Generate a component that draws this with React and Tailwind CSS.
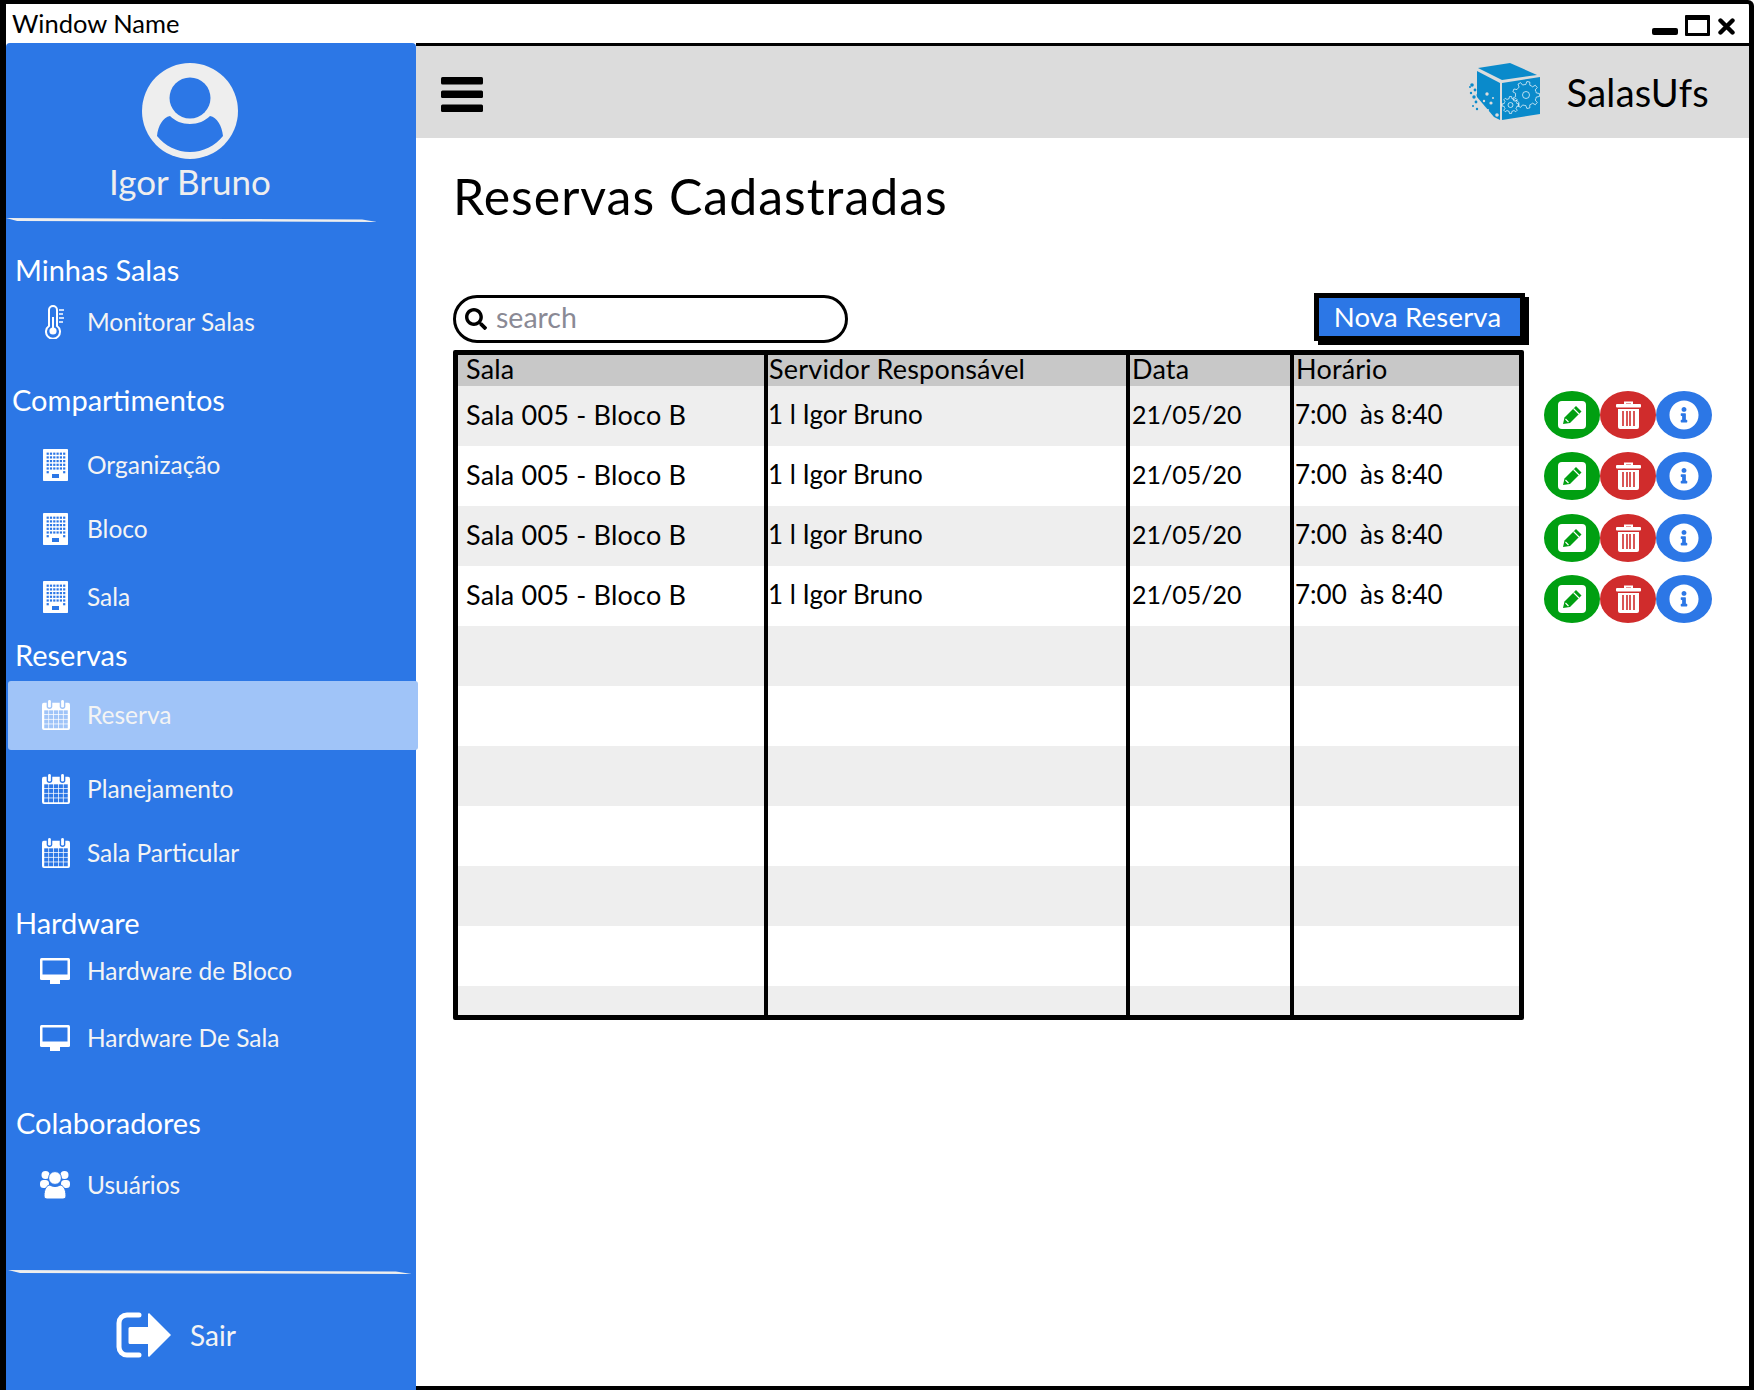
import { FaSearch, FaInfoCircle } from "react-icons/fa";

const FONT = "font-['Lato','Liberation_Sans',sans-serif]";

function Avatar() {
  return (
    <svg viewBox="0 0 96 96" className="w-24 h-24">
      <circle cx="48" cy="48" r="48" fill="#eeeeee" />
      <circle cx="48" cy="35" r="20.5" fill="#2c77e6" />
      <path
        d="M15 73C16 63 21 54 28 53C33 58 40 61 48 61C56 61 63 58 68 53C75 54 80 63 81 73C73 83 61 89 48 89C35 89 23 83 15 73Z"
        fill="#2c77e6"
      />
    </svg>
  );
}

function Thermometer() {
  return (
    <svg viewBox="0 0 20 34" className="w-5 h-[34px]" fill="none" stroke="white">
      <path d="M4 21V5a4 4 0 0 1 8 0V21a7 7 0 1 1-8 0Z" strokeWidth="2" />
      <path d="M8 12V25" strokeWidth="2" />
      <circle cx="8" cy="26" r="3.6" fill="white" stroke="none" />
      <path d="M14 5h5M14 9h4M14 13h5M14 17h4" strokeWidth="1.7" />
    </svg>
  );
}

function Building() {
  const dots = [];
  for (let r = 0; r < 6; r++) {
    for (let c = 0; c < 6; c++) {
      if (r === 5 && c > 0 && c < 5) continue;
      dots.push(<rect key={r + "-" + c} x={3.6 + c * 3.3} y={3.6 + r * 3.7} width="2.2" height="2.2" fill="#2c77e6" />);
    }
  }
  return (
    <svg viewBox="0 0 25 32" className="w-[25px] h-8">
      <rect width="25" height="32" rx="0.8" fill="white" />
      {dots}
      <rect x="9" y="25" width="7" height="4" fill="#2c77e6" />
    </svg>
  );
}

function Calendar({ active }) {
  const cells = [];
  for (let r = 0; r < 4; r++) {
    for (let c = 0; c < 5; c++) {
      cells.push(<rect key={r + "-" + c} x={2.4 + c * 5.2} y={11 + r * 5} width="4.4" height="4.2" />);
    }
  }
  return (
    <svg viewBox="0 0 30 32" className="w-[30px] h-8 ml-[2px]">
      <rect y="3" width="30" height="29" rx="2" fill="white" />
      <g className={active ? "fill-[#a0c4f8]" : "fill-[#2c77e6]"}>
        {cells}
        <rect x="5" y="0" width="6" height="9.500" rx="3" />
        <rect x="19" y="0" width="6" height="9.500" rx="3" />
      </g>
      <rect x="6.500" y="0" width="3" height="8" rx="1.500" fill="white" />
      <rect x="20.500" y="0" width="3" height="8" rx="1.500" fill="white" />
    </svg>
  );
}

function Desktop() {
  return (
    <svg viewBox="0 0 30 26" className="w-[30px] h-[26px]">
      <rect width="30" height="22" rx="1.5" fill="white" />
      <rect x="2.5" y="2.5" width="25" height="14" fill="#2c77e6" />
      <rect x="10" y="22" width="10" height="4" fill="white" />
    </svg>
  );
}

function Users() {
  return (
    <svg viewBox="0 0 30 28" className="w-[30px] h-7">
      <circle cx="5.5" cy="4" r="4" fill="white" />
      <circle cx="24.5" cy="4" r="4" fill="white" />
      <rect x="0" y="9" width="9" height="8" rx="3.5" fill="white" />
      <rect x="21" y="9" width="9" height="8" rx="3.5" fill="white" />
      <circle cx="15" cy="7" r="6.4" fill="white" stroke="#2c77e6" strokeWidth="1" />
      <path
        d="M4 25C4 18 7 14 10 14C13 16 17 16 20 14C23 14 26 18 26 25C26 27 24.500 28 23 28H7C5.500 28 4 27 4 25Z"
        fill="white"
        stroke="#2c77e6"
        strokeWidth="1"
      />
    </svg>
  );
}

function SignOut() {
  return (
    <svg viewBox="0 0 56 46" className="w-14 h-[46px]">
      <path d="M23 3H11a8 8 0 0 0-8 8V35a8 8 0 0 0 8 8H23" fill="none" stroke="white" strokeWidth="5" strokeLinecap="round" />
      <path d="M14 15H32V2.5a1 1 0 0 1 2-.5L55 23L34 44a1 1 0 0 1-2-.5V32H14a1.5 1.5 0 0 1-1.500-1.500V16.500A1.500 1.500 0 0 1 14 15Z" fill="white" />
    </svg>
  );
}

function Bars() {
  return (
    <svg viewBox="0 0 42 35" className="w-[42px] h-[35px] mt-[5px]">
      <rect width="42" height="7.500" rx="1.500" fill="black" />
      <rect y="13.500" width="42" height="7.500" rx="1.500" fill="black" />
      <rect y="27.500" width="42" height="7.500" rx="1.500" fill="black" />
    </svg>
  );
}

// outline of a gear, used twice in the logo
function gearPath(cx, cy, outer, inner, teeth) {
  let d = "";
  const step = (Math.PI * 2) / teeth;
  for (let i = 0; i < teeth; i++) {
    const a = i * step;
    const pts = [
      [inner, a - step * 0.5],
      [inner, a - step * 0.28],
      [outer, a - step * 0.16],
      [outer, a + step * 0.16],
      [inner, a + step * 0.28],
    ];
    pts.forEach(([r, t], k) => {
      d += (i === 0 && k === 0 ? "M" : "L") + (cx + r * Math.cos(t)).toFixed(2) + " " + (cy + r * Math.sin(t)).toFixed(2);
    });
  }
  return d + "Z";
}

function Logo() {
  const particles = [
    [32, 34, 1.8], [35, 39, 1.4], [31, 42, 1.2], [34, 46, 1.7], [36, 51, 1.4], [33, 55, 1], [37, 58, 1.2], [30, 36, 1], [38, 44, 1.500],
  ];
  const holes = [
    [47, 43, 1.7], [44, 50, 1.2], [51, 52, 1.6], [48, 59, 1], [57, 64, 1.8], [53, 47, 1],
  ];
  return (
    <svg viewBox="27 12 74 58" className="w-[74px] h-[58px]">
      <path d="M38 17L70 12L97 24L62 29Z" fill="#0a8acb" />
      <path d="M37 20L60 32L60 69L54 66L37 46Z" fill="#0a8acb" />
      <path d="M62 32L100 26L100 63L62 69Z" fill="#0a8acb" />
      {particles.map(([x, y, r], i) => (
        <circle key={i} cx={x} cy={y} r={r} fill="#0a8acb" />
      ))}
      {holes.map(([x, y, r], i) => (
        <circle key={i} cx={x} cy={y} r={r} fill="#dcdcdc" />
      ))}
      <g fill="none" stroke="white" strokeWidth="0.7">
        <path d={gearPath(86, 44, 13.5, 10.5, 9)} />
        <circle cx="86" cy="44" r="3.500" />
        <path d={gearPath(70.5, 54, 8.5, 6.5, 8)} />
        <circle cx="70.500" cy="54" r="2.500" />
      </g>
    </svg>
  );
}

function Divider({ width }) {
  return (
    <svg viewBox="0 0 100 4" preserveAspectRatio="none" className="block h-1" style={{ width }}>
      <path d="M0 0 L60 1 L96 1.600 L100 4 L50 3.400 L3 3 Z" fill="#eeeeee" />
    </svg>
  );
}

function GroupTitle({ children, className }) {
  return <div className={"h-9 pb-[2px] flex items-center text-[29px] text-white leading-none " + className}>{children}</div>;
}

function NavItem({ icon, label, className }) {
  return (
    <div className={"h-10 pl-[34px] flex items-center text-[24.5px] text-[#f4f4f4] leading-none " + className}>
      <span className="w-[30px] flex justify-center">{icon}</span>
      <span className="ml-[17px]">{label}</span>
    </div>
  );
}

function Sidebar() {
  return (
    <aside className="w-[410px] shrink-0 h-full bg-[#2c77e6] flex flex-col rounded-t-sm">
      <div className="pt-5 flex flex-col items-center pr-[48px] pl-[6px]">
        <Avatar />
        <div className="h-[44px] flex items-center text-[35px] text-[#eeeeee] leading-none">Igor Bruno</div>
      </div>
      <div className="mt-[15px]">
        <Divider width={371} />
      </div>

      <GroupTitle className="mt-[30px] pl-[9px]">Minhas Salas</GroupTitle>
      <NavItem className="mt-[14px]" icon={<Thermometer />} label="Monitorar Salas" />

      <GroupTitle className="mt-[40px] pl-[6px]">Compartimentos</GroupTitle>
      <NavItem className="mt-[27px]" icon={<Building />} label="Organização" />
      <NavItem className="mt-[24px]" icon={<Building />} label="Bloco" />
      <NavItem className="mt-[28px]" icon={<Building />} label="Sala" />

      <GroupTitle className="mt-[20px] pl-[9px]">Reservas</GroupTitle>
      <div className="mt-[8px] ml-[2px] w-[410px] h-[69px] pb-[1px] relative z-10 bg-[#a0c4f8] rounded-[3px] pl-[32px] flex items-center text-[24.5px] text-[#f4f4f4] leading-none">
        <span className="w-[30px] flex justify-center">
          <Calendar active />
        </span>
        <span className="ml-[17px]">Reserva</span>
      </div>
      <NavItem className="mt-[19px]" icon={<Calendar />} label="Planejamento" />
      <NavItem className="mt-[24px]" icon={<Calendar />} label="Sala Particular" />

      <GroupTitle className="mt-[32px] pl-[9px]">Hardware</GroupTitle>
      <NavItem className="mt-[10px]" icon={<Desktop />} label="Hardware de Bloco" />
      <NavItem className="mt-[27px]" icon={<Desktop />} label="Hardware De Sala" />

      <GroupTitle className="mt-[47px] pl-[10px]">Colaboradores</GroupTitle>
      <NavItem className="mt-[24px]" icon={<Users />} label="Usuários" />

      <div className="mt-[65px] ml-[2px]">
        <Divider width={404} />
      </div>
      <div className="mt-[38px] pl-[110px] flex items-center">
        <SignOut />
        <span className="ml-[18px] text-[28px] text-[#f4f4f4] leading-none">Sair</span>
      </div>
    </aside>
  );
}

function Cell({ children, className }) {
  return <div className={"flex items-center whitespace-nowrap pb-[4px] " + className}>{children}</div>;
}

const COLS = "grid grid-cols-[310px_362px_164px_1fr]";
const LINE = "border-r-[4px] border-black";

function HeaderRow() {
  return (
    <div className={COLS + " h-[31px] bg-[#c8c8c8] text-[27px] tracking-[0.2px] text-black leading-none"}>
      <Cell className={"pl-[8px] " + LINE}>Sala</Cell>
      <Cell className={"pl-[1px] " + LINE}>Servidor Responsável</Cell>
      <Cell className={"pl-[2px] " + LINE}>Data</Cell>
      <Cell className="pl-[2px]">Horário</Cell>
    </div>
  );
}

function Row({ filled, shaded, height }) {
  return (
    <div className={COLS + " text-black leading-none " + height + " " + (shaded ? "bg-[#eeeeee]" : "bg-white")}>
      <Cell className={"pl-[8px] text-[27px] tracking-[0.2px] " + LINE}>{filled && "Sala 005 - Bloco B"}</Cell>
      <Cell className={"text-[26px] " + LINE}>{filled && "1 l Igor Bruno"}</Cell>
      <Cell className={"pl-[2px] text-[25px] " + LINE}>{filled && "21/05/20"}</Cell>
      <Cell className="pl-[1px] text-[26px]">{filled && "7:00\u00a0\u00a0às 8:40"}</Cell>
    </div>
  );
}

function Actions({ className }) {
  return (
    <div className={"flex " + className}>
      <button className="w-14 h-12 rounded-[50%] bg-[#009f11] flex items-center justify-center">
        <svg viewBox="0 0 28 28" className="w-7 h-7">
          <rect width="28" height="28" rx="4" fill="white" />
          <path d="M5 23L6.500 16.500L18 5L23.500 10.500L12 22Z" fill="#009f11" />
          <path d="M15.500 7.500L21 13M7.500 18L10.500 21" stroke="white" strokeWidth="1.100" />
        </svg>
      </button>
      <button className="w-14 h-12 rounded-[50%] bg-[#d02c2c] flex items-center justify-center">
        <svg viewBox="0 0 25 28" className="w-[25px] h-7">
          <path d="M9 3V1.500h7V3" fill="none" stroke="white" strokeWidth="2" />
          <rect y="3" width="25" height="3.500" rx="1" fill="white" />
          <path d="M2 8H23V26a2 2 0 0 1-2 2H4a2 2 0 0 1-2-2Z" fill="white" />
          <path d="M7 10V25M11 10V25M14 10V25M18 10V25" stroke="#d02c2c" strokeWidth="1.600" />
        </svg>
      </button>
      <button className="w-14 h-12 rounded-[50%] bg-[#2c77e6] flex items-center justify-center">
        <FaInfoCircle className="w-[30px] h-[30px] text-white" />
      </button>
    </div>
  );
}

export default function App() {
  return (
    <div className={"w-[1754px] h-[1390px] bg-white flex flex-col overflow-hidden border-t-[4px] border-l-[6px] border-r-[5px] border-black rounded-tr-md " + FONT}>
      <div className="h-[39px] shrink-0 pl-[6px] pr-[14px] flex items-center justify-between">
        <span className="text-[25.5px] text-black leading-none">Window Name</span>
        <div className="flex items-end gap-[7px] mt-[3px]">
          <div className="w-[26px] h-[7px] bg-black rounded-[2px] mb-[1px]" />
          <div className="w-[25px] h-[21px] border-[3px] border-t-[5px] border-black rounded-[1px]" />
          <svg viewBox="0 0 17 17" className="w-[17px] h-[17px] mb-[1px] ml-[1px]">
            <path d="M2.500 2.500L14.500 14.500M14.500 2.500L2.500 14.500" stroke="black" strokeWidth="4.400" strokeLinecap="round" />
          </svg>
        </div>
      </div>

      <div className="flex-1 flex min-h-0">
        <Sidebar />

        <main className="flex-1 flex flex-col border-t-[3px] border-b-[4px] border-black min-w-0">
          <header className="h-[92px] shrink-0 bg-[#dcdcdc] pl-[25px] pr-[40px] flex items-center justify-between">
            <Bars />
            <div className="flex items-center gap-[26px]">
              <Logo />
              <span className="text-[38px] tracking-[0.3px] text-black leading-none">SalasUfs</span>
            </div>
          </header>

          <div className="pl-[37px] flex-1">
            <h1 className="mt-[30px] h-[56px] flex items-center text-[50px] tracking-[1px] text-black leading-none font-normal">
              Reservas Cadastradas
            </h1>

            <div className="mt-[71px] w-[1072px] flex items-start justify-between">
              <div className="w-[395px] h-[48px] border-[3px] border-black rounded-[24px] pl-[9px] flex items-center gap-[9px]">
                <FaSearch className="w-[22px] h-[22px] text-black" />
                <span className="text-[28.5px] text-[#8a8a95] leading-none pb-[4px]">search</span>
              </div>
              <button className="w-[211px] h-[48px] pr-[4px] -mt-[2px] border-[5px] border-black bg-[#2c77e6] shadow-[4px_4px_0_#000] text-[27.5px] tracking-[0.2px] text-white leading-none">
                Nova Reserva
              </button>
            </div>

            <div className="mt-[7px] flex items-start">
              <div className="w-[1071px] h-[670px] border-[5px] border-black overflow-hidden rounded-[2px]">
                <HeaderRow />
                {[0, 1, 2, 3, 4, 5, 6, 7, 8, 9].map((i) => (
                  <Row key={i} filled={i < 4} shaded={i % 2 === 0} height="h-[60px]" />
                ))}
                <Row shaded height="h-[30px]" />
              </div>

              <div className="ml-[20px] pt-[41px] flex flex-col">
                <Actions />
                <Actions className="mt-[13px]" />
                <Actions className="mt-[14px]" />
                <Actions className="mt-[13px]" />
              </div>
            </div>
          </div>
        </main>
      </div>
    </div>
  );
}
